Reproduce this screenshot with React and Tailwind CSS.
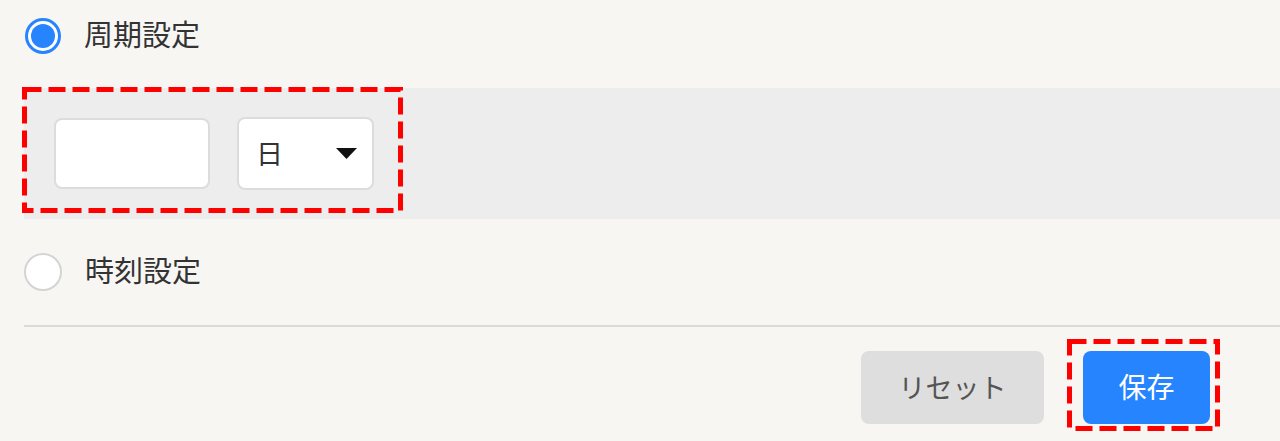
import React from "react";

export default function App() {
  const font = { fontFamily: '"Noto Sans CJK JP", "Noto Sans", sans-serif' };
  return (
    <div className="w-full h-[441px] bg-[#f7f6f3] overflow-hidden text-[#333]" style={font}>
      <div className="pl-[24px]">
        <div className="h-[72px] flex items-center">
          <div className="ml-[1px] w-[36px] h-[36px] rounded-full border-[3px] border-[#2684ff] bg-white flex items-center justify-center">
            <div className="w-[24px] h-[24px] rounded-full bg-[#2684ff]" />
          </div>
          <span className="ml-[23px] pb-[5px] text-[29px] leading-none">周期設定</span>
        </div>

        <div className="relative mt-[16px] h-[131px] bg-[#ededed] pl-[30px] flex items-center gap-[27px]">
          <div className="w-[156px] h-[71px] bg-white border-2 border-[#dcdcdc] rounded-[8px]" />
          <div className="w-[137px] h-[73px] bg-white border-2 border-[#dcdcdc] rounded-[8px] flex items-center justify-between pl-[17px] pr-[15px]">
            <span className="text-[27px] leading-none pb-[3px]">日</span>
            <svg width="21" height="11" viewBox="0 0 21 11">
              <path d="M0 0 L21 0 L10.5 11 Z" fill="#111" />
            </svg>
          </div>
          <svg className="absolute left-[-2px] top-[-1px] w-[381px] h-[126px] pointer-events-none" viewBox="0 0 381 126">
            <rect x="2.5" y="2.5" width="376" height="121" fill="none" stroke="#ff0000" strokeWidth="5" strokeDasharray="17 7" />
          </svg>
        </div>

        <div className="h-[106px] flex items-center">
          <div className="w-[38px] h-[38px] rounded-full border-2 border-[#d4d4d4] bg-white" />
          <span className="ml-[23px] pb-[5px] text-[29px] leading-none">時刻設定</span>
        </div>

        <div className="h-[2px] bg-[#dcdad6]" />

        <div className="mt-[24px] flex justify-end pr-[70px] gap-[39px]">
          <button className="w-[183px] h-[73px] rounded-[8px] bg-[#dedede] text-[#555] text-[27px] leading-none flex items-center justify-center pb-[3px]">
            リセット
          </button>
          <div className="relative">
            <button className="w-[127px] h-[73px] rounded-[8px] bg-[#2684ff] text-white text-[28px] leading-none flex items-center justify-center pb-[3px]">
              保存
            </button>
            <svg className="absolute left-[-16px] top-[-12px] w-[153px] h-[92px] pointer-events-none" viewBox="0 0 153 92">
              <rect x="2.5" y="2.5" width="148" height="87" fill="none" stroke="#ff0000" strokeWidth="5" strokeDasharray="17 7" />
            </svg>
          </div>
        </div>
      </div>
    </div>
  );
}
